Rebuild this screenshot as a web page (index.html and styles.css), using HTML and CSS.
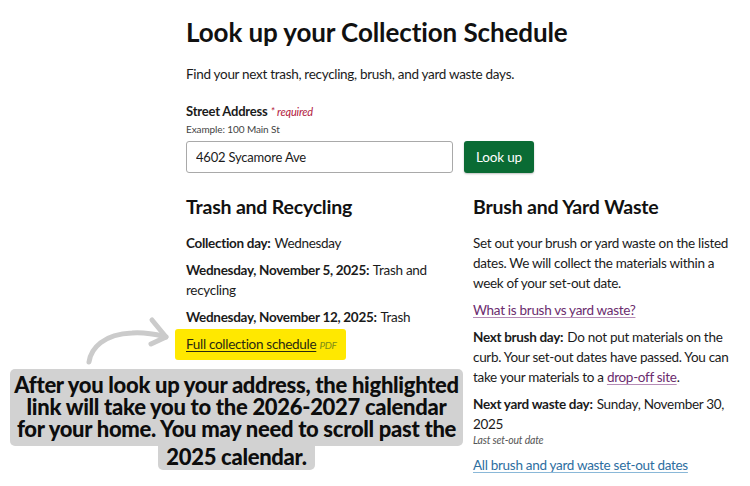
FILE: index.html
```html
<!DOCTYPE html>
<html lang="en">
<head>
<meta charset="utf-8">
<title>Look up your Collection Schedule</title>
<link rel="stylesheet" href="styles.css">
</head>
<body>
<main class="page">
  <h1 class="title">Look up your Collection Schedule</h1>
  <p class="intro">Find your next trash, recycling, brush, and yard waste days.</p>
  <form class="lookup">
    <label class="label" for="addr">Street Address <span class="req">* required</span></label>
    <div class="hint">Example: 100 Main St</div>
    <div class="row">
      <input id="addr" class="field" type="text" value="4602 Sycamore Ave">
      <button class="btn" type="button">Look up</button>
    </div>
  </form>
  <div class="results">
    <section class="col col-left">
      <h2 class="sub">Trash and Recycling</h2>
      <p class="item"><b>Collection day:</b> Wednesday</p>
      <p class="item"><b>Wednesday, November 5, 2025:</b> Trash and recycling</p>
      <p class="item"><b>Wednesday, November 12, 2025:</b> Trash</p>
      <p class="item highlight"><a class="link-dark" href="#">Full collection schedule</a> <span class="pdf">PDF</span></p>
    </section>
    <section class="col col-right">
      <h2 class="sub">Brush and Yard Waste</h2>
      <p class="item">Set out your brush or yard waste on the listed dates. We will collect the materials within a week of your set-out date.</p>
      <p class="item"><a class="link-visited" href="#">What is brush vs yard waste?</a></p>
      <p class="item"><b>Next brush day:</b> Do not put materials on the curb. Your set-out dates have passed. You can take your materials to a <a class="link-visited" href="#">drop-off site</a>.</p>
      <p class="item tight"><b>Next yard waste day:</b> Sunday, November 30, 2025</p>
      <p class="small-note">Last set-out date</p>
      <p class="item"><a class="link-blue" href="#">All brush and yard waste set-out dates</a></p>
    </section>
  </div>
</main>

<svg class="arrow" width="100" height="60" viewBox="0 0 100 60" aria-hidden="true">
  <path d="M9 52 C11 38 24 24 52 23 C68 22 78 25 86 27" fill="none" stroke="#cbcbcb" stroke-width="5" stroke-linecap="round"/>
  <path d="M72 10 L86 27 L71 34" fill="none" stroke="#cbcbcb" stroke-width="5" stroke-linecap="round" stroke-linejoin="round"/>
</svg>

<div class="note">
  <div class="note-main">After you look up your address, the highlighted<br>link will take you to the 2026-2027 calendar<br>for your home. You may need to scroll past the</div>
  <div class="note-tail">2025 calendar.</div>
</div>
</body>
</html>
```

FILE: styles.css
```css
* { box-sizing: border-box; }
html, body { margin: 0; padding: 0; background: #fff; }
body {
  width: 750px;
  height: 486px;
  overflow: hidden;
  position: relative;
  font-family: Lato, "Noto Sans", sans-serif;
  color: #1b1b1b;
  font-size: 13.5px;
  line-height: 20px;
  letter-spacing: -0.3px;
}
.page {
  padding: 16px 0 0 186px;
}
.title {
  margin: 0;
  font-size: 26px;
  line-height: 32px;
  font-weight: 700;
  color: #111;
  letter-spacing: -0.1px;
}
.intro {
  margin: 16px 0 0;
}
.lookup { margin-top: 18px; }
.label {
  display: block;
  font-size: 13px;
  font-weight: 700;
  line-height: 18px;
  letter-spacing: -0.2px;
}
.req {
  color: #b1173b;
  font-style: italic;
  font-weight: 400;
  font-size: 11px;
}
.hint {
  font-size: 10px;
  color: #444;
  line-height: 15px;
  margin-top: 1px;
  letter-spacing: -0.1px;
}
.row {
  display: flex;
  gap: 11px;
  margin-top: 4px;
}
.field {
  width: 267px;
  height: 32px;
  border: 1px solid #a9a9a9;
  border-radius: 3px;
  padding: 0 9px;
  font-family: inherit;
  font-size: 13px;
  letter-spacing: -0.2px;
  color: #1b1b1b;
}
.btn {
  width: 70px;
  height: 32px;
  border: 0;
  border-radius: 3px;
  background: #0a6b34;
  color: #fff;
  font-family: inherit;
  font-size: 13.5px;
  letter-spacing: -0.2px;
  box-shadow: 0 1px 2px rgba(0,0,0,0.25);
}
.results {
  display: grid;
  grid-template-columns: 267px 270px;
  column-gap: 20px;
  margin-top: 21px;
}
.sub {
  margin: 0 0 13px;
  font-size: 19.5px;
  line-height: 26px;
  font-weight: 700;
  color: #111;
  letter-spacing: -0.2px;
}
.item {
  margin: 0 0 7px;
}
.item b { font-weight: 700; margin-right: 1px; }
.item.tight { margin-bottom: 0; }
.small-note {
  margin: -2px 0 7px;
  font-size: 10.5px;
  line-height: 16px;
  font-style: italic;
  color: #555;
  letter-spacing: -0.2px;
}
.highlight {
  display: inline-block;
  margin: -5px 0 0 -11px;
  padding: 5px 9px 5px 11px;
  background: #ffe800;
  border-radius: 3px;
}
.link-dark {
  color: #2a2a10;
  text-decoration: underline;
  text-underline-offset: 2px;
}
.pdf {
  font-size: 10px;
  font-style: italic;
  color: #7d8d17;
}
.link-visited {
  color: #6b2c6e;
  text-decoration: underline;
  text-decoration-color: #b58cb6;
  text-underline-offset: 2px;
}
.link-blue {
  color: #2d6e9f;
  text-decoration: underline;
  text-decoration-color: #8ab8d8;
  text-underline-offset: 2px;
}
.arrow {
  position: absolute;
  left: 80px;
  top: 310px;
}
.note {
  position: absolute;
  left: 10px;
  top: 369px;
  width: 453px;
  display: flex;
  flex-direction: column;
  align-items: center;
  font-family: Lato, "Noto Sans", sans-serif;
  font-weight: 900;
  font-size: 22px;
  line-height: 22px;
  color: #0d0d0d;
  text-align: center;
  letter-spacing: -0.3px;
}
.note-main {
  width: 100%;
  background: #d2d2d2;
  border-radius: 5px;
  padding: 5px 4px 6px;
}
.note-tail {
  background: #d2d2d2;
  border-radius: 0 0 5px 5px;
  padding: 0 8px 2px;
}
```
